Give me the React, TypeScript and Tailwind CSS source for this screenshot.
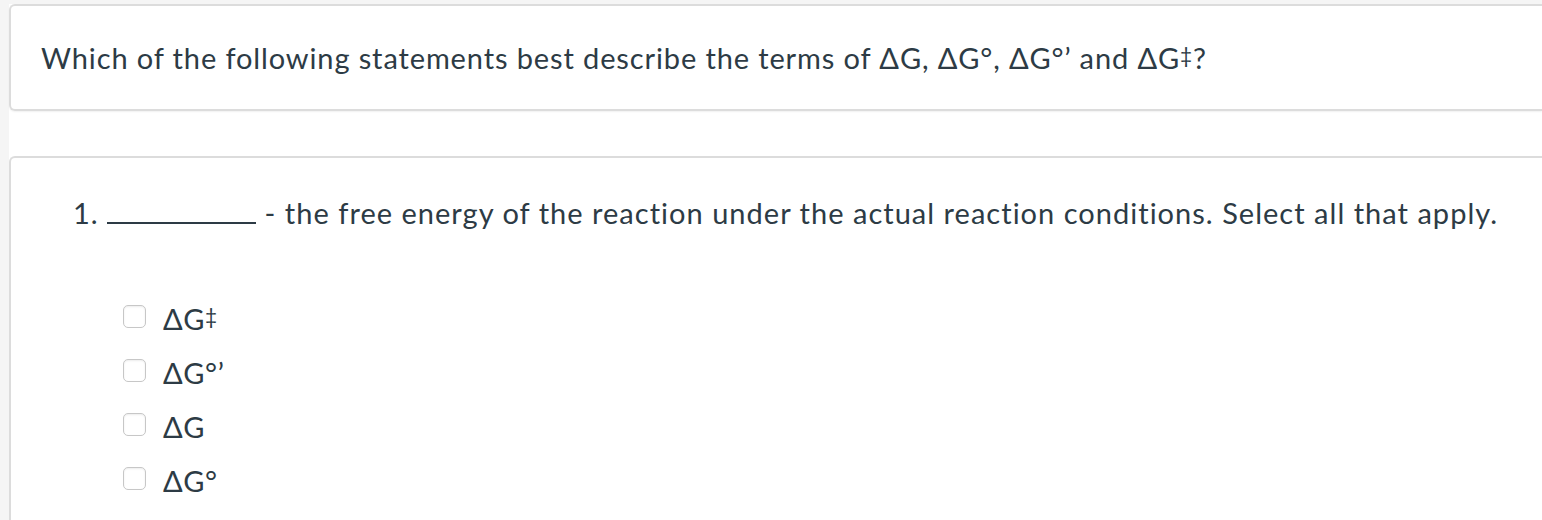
function DD() {
  return <span className="relative top-[-0.3em] text-[0.72em] leading-none">‡</span>;
}

export default function App() {
  const options = [
    <>ΔG<DD /></>,
    <>ΔG°’</>,
    <>ΔG</>,
    <>ΔG°</>,
  ];

  return (
    <div
      className="h-[520px] w-[1542px] overflow-hidden bg-[#f5f5f5] pl-[9px] pt-[4px] text-[#2d3b45]"
      style={{ fontFamily: "Lato, 'Noto Sans', sans-serif" }}
    >
      <div className="bg-white">
        <div className="flex h-[107px] items-center rounded-l-md border-y-2 border-l-2 border-[#dcdcdc] pl-[30px] shadow-[0_1px_2px_rgba(0,0,0,0.06)]">
          <p className="text-[29px] leading-none tracking-[0.88px]">
            Which of the following statements best describe the terms of ΔG, ΔG°, ΔG°’ and ΔG<DD />?
          </p>
        </div>
        <div className="h-[45px]" />
        <div className="h-[370px] rounded-tl-md border-t-2 border-l-2 border-[#dcdcdc] pl-[62px] pt-[40px]">
          <p className="text-[29px] leading-none tracking-[1.02px]">
            1. <span className="inline-block w-[149px] border-b-2 border-[#2d3b45] align-baseline" /> - the free energy of the reaction under the actual reaction conditions. Select all that apply.
          </p>
          <div className="mt-[78px] flex flex-col gap-[31px] pl-[50px]">
            {options.map((o, i) => (
              <label key={i} className="flex items-center gap-[17px] h-[23px]">
                <span className="h-[23px] w-[23px] rounded-[5px] border border-[#c7c7c7] bg-white shadow-[inset_0_1px_2px_rgba(0,0,0,0.08)]" />
                <span className="text-[29px] leading-none tracking-[0.6px] pt-[4px]">{o}</span>
              </label>
            ))}
          </div>
        </div>
      </div>
    </div>
  );
}
